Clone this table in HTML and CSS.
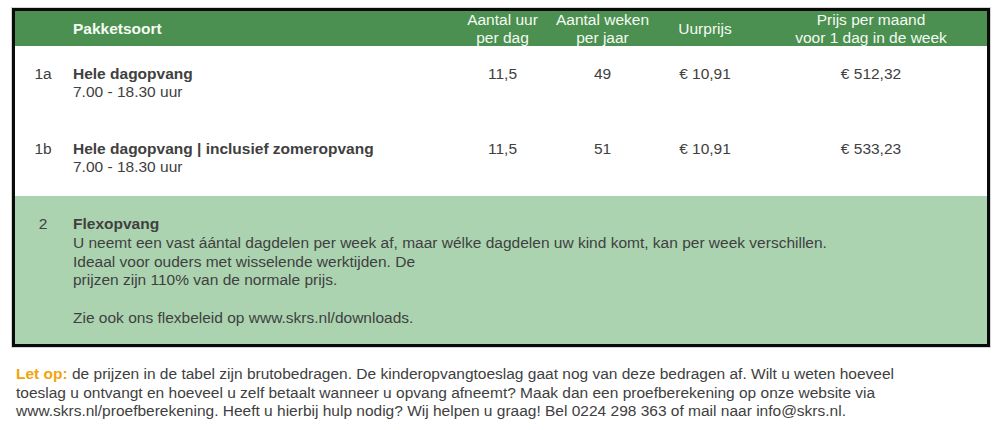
FILE: index.html
```html
<!DOCTYPE html>
<html lang="nl">
<head>
<meta charset="utf-8">
<title>Pakketten</title>
<link rel="stylesheet" href="styles.css">
</head>
<body>
<div class="frame">
  <div class="row head">
    <div class="c num"></div>
    <div class="c name strong">Pakketsoort</div>
    <div class="c mid">Aantal uur<br>per dag</div>
    <div class="c mid">Aantal weken<br>per jaar</div>
    <div class="c mid">Uurprijs</div>
    <div class="c mid">Prijs per maand<br>voor 1 dag in de week</div>
  </div>
  <div class="row item">
    <div class="c num">1a</div>
    <div class="c name"><span class="strong">Hele dagopvang</span><br>7.00 - 18.30 uur</div>
    <div class="c mid">11,5</div>
    <div class="c mid">49</div>
    <div class="c mid">€ 10,91</div>
    <div class="c mid">€ 512,32</div>
  </div>
  <div class="row item">
    <div class="c num">1b</div>
    <div class="c name"><span class="strong">Hele dagopvang | inclusief zomeropvang</span><br>7.00 - 18.30 uur</div>
    <div class="c mid">11,5</div>
    <div class="c mid">51</div>
    <div class="c mid">€ 10,91</div>
    <div class="c mid">€ 533,23</div>
  </div>
  <div class="flex">
    <div class="c num">2</div>
    <div class="c flextext"><span class="strong">Flexopvang</span><br>U neemt een vast áántal dagdelen per week af, maar wélke dagdelen uw kind komt, kan per week verschillen.<br>Ideaal voor ouders met wisselende werktijden. De<br>prijzen zijn 110% van de normale prijs.<br><br>Zie ook ons flexbeleid op www.skrs.nl/downloads.</div>
  </div>
</div>
<p class="note"><span class="letop">Let op:</span> de prijzen in de tabel zijn brutobedragen. De kinderopvangtoeslag gaat nog van deze bedragen af. Wilt u weten hoeveel<br>toeslag u ontvangt en hoeveel u zelf betaalt wanneer u opvang afneemt? Maak dan een proefberekening op onze website via<br>www.skrs.nl/proefberekening. Heeft u hierbij hulp nodig? Wij helpen u graag! Bel 0224 298 363 of mail naar info@skrs.nl.</p>
</body>
</html>
```
FILE: styles.css
```css
html, body {
  margin: 0;
  padding: 0;
  background: #ffffff;
}
body {
  padding: 8px 10px 0 12px;
  font-family: "Liberation Sans", Arial, sans-serif;
  font-size: 15.5px;
  color: #404040;
}
.frame {
  width: 972px;
  border: 3px solid #0a0a0a;
  box-shadow: 0 0 0 1px #d4d4d4;
}
.row {
  display: grid;
  grid-template-columns: 56px 384px 95px 105px 100px 1fr;
}
.head {
  height: 35px;
  background: #4b8f51;
  color: #f4fbf2;
  line-height: 17.5px;
  align-items: center;
}
.item {
  height: 75px;
  box-sizing: border-box;
  padding-top: 19px;
  line-height: 18px;
  background: #ffffff;
  align-items: start;
}
.c.num {
  text-align: center;
}
.c.name {
  padding-left: 2px;
}
.c.mid {
  text-align: center;
}
.strong {
  font-weight: bold;
}
.flex {
  display: grid;
  grid-template-columns: 56px 1fr;
  height: 148px;
  box-sizing: border-box;
  padding-top: 19px;
  line-height: 18.8px;
  background: #abd3b0;
}
.flextext {
  padding-left: 2px;
}
.note {
  margin: 18px 0 0 4px;
  line-height: 18.5px;
}
.letop {
  color: #f2a40c;
  font-weight: bold;
}
```
